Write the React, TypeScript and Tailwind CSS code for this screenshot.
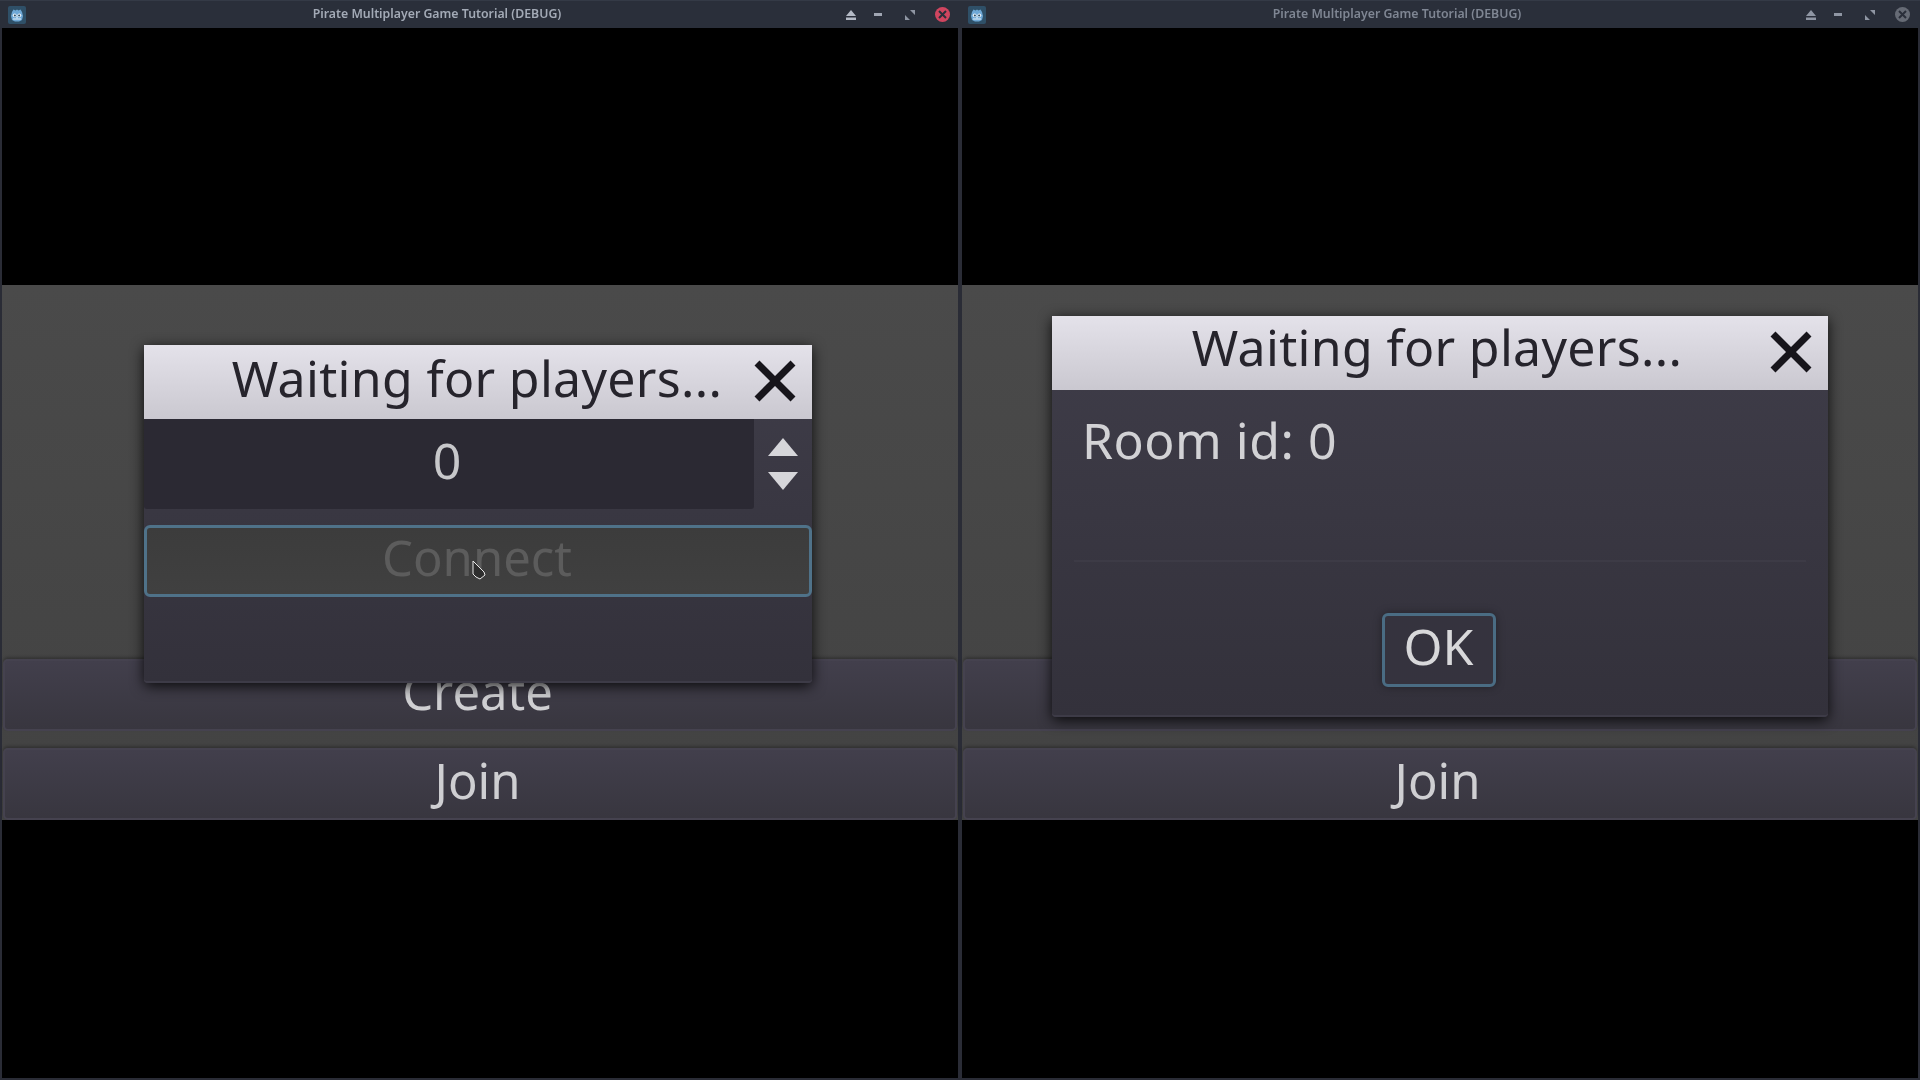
import React from 'react';

function GodotIcon() {
    return (
        <svg width="18" height="18" viewBox="0 0 18 18" className="shrink-0">
            <rect x="0" y="0" width="18" height="18" rx="2" fill="#2f5068" />
            <path d="M4 6 L5.5 3.5 L7.5 4.5 L9 3.5 L10.5 4.5 L12.5 3.5 L14 6 L15 10 L14 14 L11 15.5 L7 15.5 L4 14 L3 10 Z" fill="#6fa8d6" />
            <circle cx="6.7" cy="9.3" r="1.9" fill="#e8f2fa" />
            <circle cx="11.3" cy="9.3" r="1.9" fill="#e8f2fa" />
            <circle cx="6.9" cy="9.4" r="1" fill="#2f5068" />
            <circle cx="11.1" cy="9.4" r="1" fill="#2f5068" />
            <rect x="8.4" y="10.5" width="1.2" height="1.8" fill="#e8f2fa" />
            <path d="M5 13 H13" stroke="#e8f2fa" strokeWidth="1" />
        </svg>
    );
}

function TitleBar({ active }: { active: boolean }) {
    return (
        <div className="relative flex h-[28px] items-center bg-[#2a2f3a] pl-[8px] pr-[10px] shrink-0 border-t border-[#343a46]">
            <GodotIcon />
            <div className={active ? "flex-1 pl-[3px] text-center text-[12.3px] font-semibold text-[#a3aab6]" : "flex-1 pl-[3px] text-center text-[12.3px] font-semibold text-[#7f8693]"}>
                Pirate Multiplayer Game Tutorial (DEBUG)
            </div>
            <div className="flex items-center shrink-0">
                <svg width="12" height="10" viewBox="0 0 12 10">
                    <path d="M6 0 L11 6 H1 Z M1 7.5 H11 V10 H1 Z" fill={active ? "#b4bac5" : "#8f96a3"} />
                </svg>
                <div className={active ? "ml-[17px] h-[3px] w-[8px] bg-[#a0a6b2]" : "ml-[17px] h-[3px] w-[8px] bg-[#8f96a3]"}></div>
                <svg width="10" height="10" viewBox="0 0 10 10" className="ml-[23px]">
                    <path d="M5 0 H10 V5 Z M0 5 L5 10 H0 Z" fill="#8f96a3" />
                </svg>
                <div className={active ? "ml-[20px] flex h-[15px] w-[15px] items-center justify-center rounded-full bg-[#d0455f]" : "ml-[20px] flex h-[15px] w-[15px] items-center justify-center rounded-full bg-[#666b75]"}>
                    <svg width="9" height="9" viewBox="0 0 9 9">
                        <path d="M1 1 L8 8 M8 1 L1 8" stroke="#2a2f3a" strokeWidth="2" />
                    </svg>
                </div>
            </div>
        </div>
    );
}

function MenuButton({ label }: { label: string }) {
    return (
        <div className="flex h-[72px] items-center justify-center rounded-[5px] bg-gradient-to-b from-[#423f4c] to-[#38363f] border-2 border-[#45424f] pb-[7px] pr-[5px] text-[49px] text-[#cfcfd2] shadow-[0_-2px_3px_rgba(0,0,0,0.25)]">
            {label}
        </div>
    );
}

function DialogTitle({ shift }: { shift: string }) {
    return (
        <div className="relative flex h-[74px] items-center justify-center bg-gradient-to-b from-[#e4e2ea] to-[#cac8d0] text-[50px] leading-none tracking-[0.33px] text-[#26242c]">
            <span className={shift}>Waiting for players...</span>
            <svg width="42" height="42" viewBox="0 0 42 42" className="absolute right-[16px] top-[15px]">
                <path d="M3 3 L39 39 M39 3 L3 39" stroke="#17151b" strokeWidth="7" />
            </svg>
        </div>
    );
}

function JoinDialog() {
    return (
        <div className="absolute left-[142px] top-[317px] w-[668px] h-[338px] rounded-[4px] bg-gradient-to-b from-[#3f3d49] to-[#33313b] shadow-[0_3px_14px_rgba(0,0,0,0.85)] flex flex-col border-b-2 border-[#3d3b47]">
            <DialogTitle shift="-translate-x-[1px] -translate-y-[4px]" />
            <div className="flex h-[90px]">
                <div className="flex flex-1 items-center justify-center rounded-b-[3px] bg-[#2b2933] pb-[8px] pr-[4px] text-[50px] text-[#c8c8cb]">0</div>
                <div className="flex w-[58px] flex-col items-center gap-[16px] pt-[19px]">
                    <svg width="30" height="18" viewBox="0 0 30 18"><path d="M15 0 L30 18 H0 Z" fill="#d6d6da" /></svg>
                    <svg width="30" height="18" viewBox="0 0 30 18"><path d="M15 18 L30 0 H0 Z" fill="#d6d6da" /></svg>
                </div>
            </div>
            <div className="mt-[16px] flex h-[72px] items-center justify-center rounded-[6px] border-[3px] border-[#4f7289] bg-gradient-to-b from-[#3c3c3c] to-[#404040] pb-[6px] pr-[2px] text-[49px] text-[#5c5c5c]">
                Connect
            </div>
        </div>
    );
}

function RoomDialog() {
    return (
        <div className="absolute left-[90px] top-[288px] w-[776px] h-[401px] rounded-[4px] bg-gradient-to-b from-[#3f3d49] to-[#33313b] shadow-[0_3px_14px_rgba(0,0,0,0.85)] flex flex-col border-b-2 border-[#3d3b47]">
            <DialogTitle shift="-translate-x-[3px] -translate-y-[6px]" />
            <div className="px-[30px] pt-[16px] text-[50px] leading-[68px] tracking-[0.5px] text-[#d2d2d5]">Room id: 0</div>
            <div className="mx-[22px] mt-[86px] h-[2px] bg-[#3d3b46]"></div>
            <div className="mt-[51px] flex justify-center">
                <div className="mr-[3px] flex h-[74px] w-[114px] items-center justify-center rounded-[6px] border-[3px] border-[#4a6c83] bg-[#35333e] pb-[7px] text-[50px] text-[#d8d8da] shadow-[0_0_8px_rgba(0,0,0,0.35)]">
                    OK
                </div>
            </div>
        </div>
    );
}

function GameWindow({ active, children, createLabel }: { active: boolean; children: React.ReactNode; createLabel: string }) {
    return (
        <div className="flex h-[1080px] w-[960px] flex-col bg-[#2a2c36]">
            <TitleBar active={active} />
            <div className="relative mx-[2px] mb-[2px] flex flex-1 flex-col bg-black">
                <div className="mt-[257px] flex h-[535px] flex-col justify-end gap-[17px] bg-gradient-to-b from-[#4a4a4a] to-[#424242] px-[1px]">
                    <MenuButton label={createLabel} />
                    <MenuButton label="Join" />
                </div>
                {children}
            </div>
        </div>
    );
}

export default function App() {
    return (
        <div className="flex h-[1080px] w-[1920px] overflow-hidden blur-[0.5px] font-['Noto_Sans',sans-serif]">
            <GameWindow active={true} createLabel="Create">
                <JoinDialog />
                <svg width="14" height="20" viewBox="0 0 14 20" className="absolute left-[470px] top-[532px]">
                    <path d="M1 1 L1 14 L4 17 L8 19 L13 15 L12 12 Z" fill="#2e2e2e" stroke="#e8e8e8" strokeWidth="1" />
                </svg>
            </GameWindow>
            <GameWindow active={false} createLabel="">
                <RoomDialog />
            </GameWindow>
        </div>
    );
}
